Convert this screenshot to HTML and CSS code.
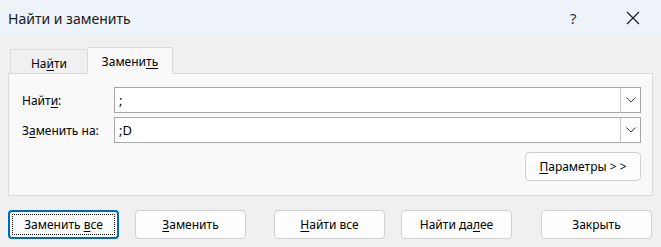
FILE: index.html
```html
<!DOCTYPE html>
<html lang="ru">
<head>
    <meta charset="UTF-8">
    <title>Найти и заменить</title>
    <link rel="stylesheet" href="styles.css">
</head>
<body>

<div class="window">
    <!-- Title bar -->
    <div class="titlebar">
        <span class="title">Найти и заменить</span>
        <span class="help">?</span>
        <span class="close">
            <svg width="14" height="14" viewBox="0 0 14 14">
                <path d="M1 1 L13 13 M13 1 L1 13" stroke="#1a1a1a" stroke-width="1.1" fill="none"/>
            </svg>
        </span>
    </div>

    <div class="content">
        <!-- Tabs -->
        <div class="tabs">
            <div class="tab">На<u>й</u>ти</div>
            <div class="tab active">Замени<u>ть</u></div>
        </div>

        <div class="panel">
            <div class="row">
                <label class="label">Найт<u>и</u>:</label>
                <div class="combo">
                    <span class="value">;</span>
                    <span class="drop">
                        <svg width="10" height="6" viewBox="0 0 10 6"><path d="M0.5 0.5 L5 5 L9.5 0.5" stroke="#444" fill="none"/></svg>
                    </span>
                </div>
            </div>
            <div class="row">
                <label class="label">З<u>а</u>менить на:</label>
                <div class="combo">
                    <span class="value">;D</span>
                    <span class="drop">
                        <svg width="10" height="6" viewBox="0 0 10 6"><path d="M0.5 0.5 L5 5 L9.5 0.5" stroke="#444" fill="none"/></svg>
                    </span>
                </div>
            </div>
            <div class="options">
                <button class="btn"><u>П</u>араметры &gt; &gt;</button>
            </div>
        </div>

        <!-- Bottom buttons -->
        <div class="actions">
            <button class="btn wide default"><span class="focus">Заменить <u>в</u>се</span></button>
            <button class="btn wide b2"><u>З</u>аменить</button>
            <button class="btn wide b3"><u>Н</u>айти все</button>
            <button class="btn wide b4">Найти да<u>л</u>ее</button>
            <button class="btn wide b5">Закрыть</button>
        </div>
    </div>
</div>

</body>
</html>
```

FILE: styles.css
```css
body {
    margin: 0;
    font-family: "Noto Sans", "Open Sans", sans-serif;
    font-size: 12px;
    color: #000;
    background-color: #f0f0f0;
}
.window {
    width: 661px;
    height: 247px;
    overflow: hidden;
    background-color: #f0f0f0;
}
u {
    text-decoration-thickness: 1px;
    text-underline-offset: 2px;
}
/* Title bar */
.titlebar {
    height: 36px;
    background-color: #eef2f9;
    display: flex;
    align-items: center;
    padding-left: 8px;
}
.title {
    font-size: 14px;
    flex: 1;
    color: #1a1a1a;
}
.help {
    font-size: 15px;
    width: 18px;
    color: #333;
    margin-right: 38px;
}
.close {
    width: 14px;
    height: 14px;
    margin-right: 21px;
    display: flex;
}
.content {
    padding: 0 8px;
}
/* Tabs */
.tabs {
    display: flex;
    align-items: flex-end;
    height: 26px;
    margin-top: 11px;
    padding-left: 2px;
}
.tab {
    width: 78px;
    height: 24px;
    box-sizing: border-box;
    border: 1px solid #dadada;
    border-bottom: none;
    background-color: #f0f0f0;
    display: flex;
    align-items: center;
    justify-content: center;
    padding-top: 3px;
}
.tab.active {
    width: 85px;
    height: 27px;
    margin-bottom: -1px;
    background-color: #f9f9f9;
    border-left: none;
    position: relative;
    z-index: 1;
    padding-top: 0;
}
.panel {
    height: 123px;
    box-sizing: border-box;
    border: 1px solid #dadada;
    background-color: #f9f9f9;
    padding: 13px 11px 0 13px;
}
.row {
    display: flex;
    align-items: center;
    margin-bottom: 4px;
}
.label {
    width: 92px;
}
.combo {
    flex: 1;
    height: 26px;
    box-sizing: border-box;
    border: 1px solid #a6a6a6;
    background-color: #fff;
    display: flex;
    align-items: center;
}
.value {
    flex: 1;
    padding-left: 4px;
    font-size: 13px;
}
.drop {
    width: 20px;
    height: 24px;
    box-sizing: border-box;
    border-left: 1px solid #c9c9c9;
    display: flex;
    align-items: center;
    justify-content: center;
}
.options {
    display: flex;
    justify-content: flex-end;
    margin-top: 9px;
}
/* Buttons */
.btn {
    font-family: inherit;
    font-size: 12px;
    color: #000;
    background-color: #fdfdfd;
    border: 1px solid #d0d0d0;
    border-radius: 4px;
    height: 29px;
    width: 116px;
    padding: 0;
    cursor: pointer;
}
.actions {
    display: flex;
    margin-top: 14px;
}
.wide {
    width: 111px;
}
.b2 { margin-left: 16px; }
.b3 { margin-left: 28px; }
.b4 { margin-left: 16px; }
.b5 { margin-left: 29px; }
.default {
    border: 2px solid #0067c0;
    padding: 2px;
}
.focus {
    display: block;
    height: 100%;
    line-height: 19px;
    box-sizing: border-box;
    border: 1px dotted #000;
}
```
